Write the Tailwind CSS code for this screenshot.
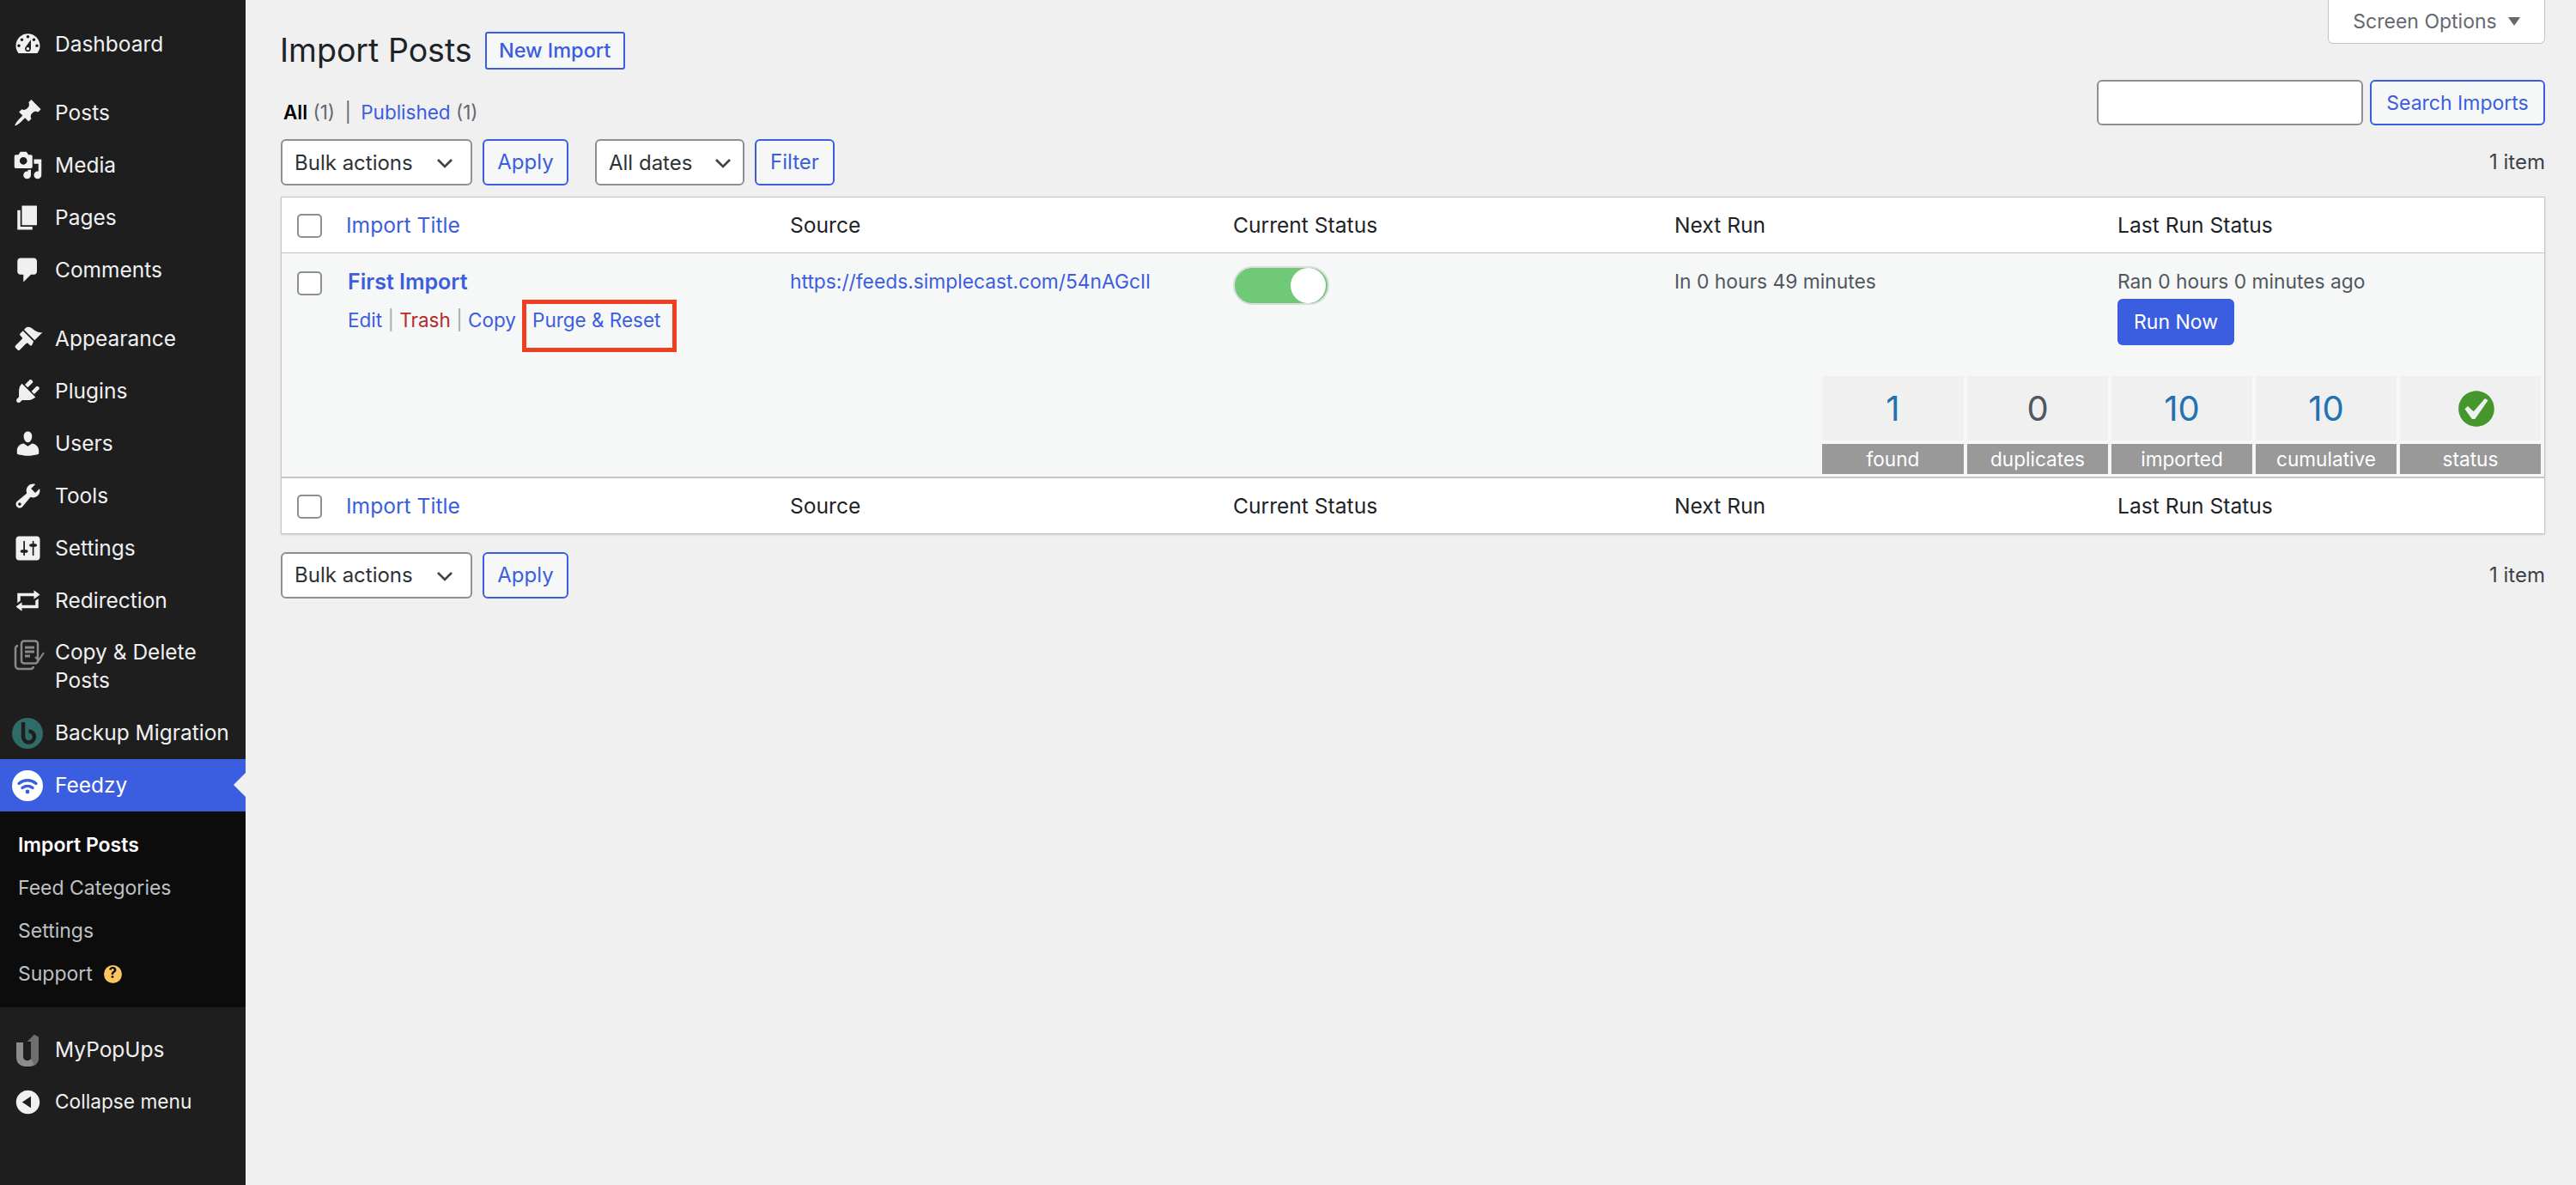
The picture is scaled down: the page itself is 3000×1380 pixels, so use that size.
<!DOCTYPE html>
<html lang="en">
<head>
    <meta charset="UTF-8">
    <title>Import Posts</title>
    <script src="https://cdn.jsdelivr.net/npm/@tailwindcss/browser@4"></script>
</head>
<body class="bg-[#f0f0f1] font-['Inter','Liberation_Sans',sans-serif] text-[#3c434a]">
<div class="flex h-[1380px] w-[3000px] overflow-hidden">
    <!-- Sidebar -->
    <aside class="w-[286px] shrink-0 bg-[#1e1e1e] text-[#f0f0f1] text-[24.5px] pt-[21px]">
        <a class="flex items-center h-[61px]"><span class="w-[64px] flex justify-center"><svg class="w-[35px] h-[35px] fill-[#f0f0f1]" fill-rule="evenodd" viewBox="0 0 20 20"><path d="M3.76 16h12.48c1.1-1.37 1.76-3.11 1.76-5 0-4.42-3.58-8-8-8s-8 3.58-8 8c0 1.89.66 3.63 1.76 5zM10 4c.55 0 1 .45 1 1s-.45 1-1 1-1-.45-1-1 .45-1 1-1zM6 6c.55 0 1 .45 1 1s-.45 1-1 1-1-.45-1-1 .45-1 1-1zm8 0c.55 0 1 .45 1 1s-.45 1-1 1-1-.45-1-1 .45-1 1-1zm-5.37 5.55L12 7v6c0 1.1-.9 2-2 2s-2-.9-2-2c0-.57.24-1.08.63-1.45zM4 10c.55 0 1 .45 1 1s-.45 1-1 1-1-.45-1-1 .45-1 1-1zm12 0c.55 0 1 .45 1 1s-.45 1-1 1-1-.45-1-1 .45-1 1-1zm-5 3c0-.55-.45-1-1-1s-1 .45-1 1 .45 1 1 1 1-.45 1-1z"/></svg></span>Dashboard</a>

        <a class="flex items-center h-[61px] mt-[19px]"><span class="w-[64px] flex justify-center"><svg class="w-[35px] h-[35px] fill-[#f0f0f1]" viewBox="0 0 20 20"><path d="M10.44 3.02l1.82-1.82 6.36 6.35-1.83 1.82c-1.05-.68-2.48-.57-3.41.36l-.75.75c-.92.93-1.04 2.35-.35 3.41l-1.83 1.82-2.41-2.41-2.8 2.79c-.42.42-3.38 2.71-3.8 2.29s1.86-3.39 2.28-3.81l2.79-2.79L4.1 9.36l1.83-1.82c1.05.69 2.48.57 3.4-.36l.75-.75c.93-.92 1.05-2.35.36-3.41z"/></svg></span>Posts</a>
        <a class="flex items-center h-[61px]"><span class="w-[64px] flex justify-center"><svg class="w-[35px] h-[35px] fill-[#f0f0f1]" fill-rule="evenodd" viewBox="0 0 20 20"><path d="M13 11V4c0-.55-.45-1-1-1h-1.67L9 1H5L3.67 3H2c-.55 0-1 .45-1 1v7c0 .55.45 1 1 1h10c.55 0 1-.45 1-1zM7 4.5c1.38 0 2.5 1.12 2.5 2.5S8.38 9.5 7 9.5 4.5 8.38 4.5 7 5.62 4.5 7 4.5zM14 6h5v10.5c0 1.38-1.12 2.5-2.5 2.5S14 17.88 14 16.5s1.12-2.5 2.5-2.5c.17 0 .34.02.5.05V9h-3V6zm-4 8.05V13h2v3.5c0 1.38-1.12 2.5-2.5 2.5S7 17.88 7 16.5 8.12 14 9.5 14c.17 0 .34.02.5.05z"/></svg></span>Media</a>
        <a class="flex items-center h-[61px]"><span class="w-[64px] flex justify-center"><svg class="w-[35px] h-[35px] fill-[#f0f0f1]" viewBox="0 0 20 20"><path d="M6 15V2h10v13H6zm-1 1h8v2H3V5h2v11z"/></svg></span>Pages</a>
        <a class="flex items-center h-[61px]"><span class="w-[64px] flex justify-center"><svg class="w-[35px] h-[35px] fill-[#f0f0f1]" viewBox="0 0 20 20"><path d="M5 2h9c1.1 0 2 .9 2 2v7c0 1.1-.9 2-2 2h-2l-5 5v-5H5c-1.1 0-2-.9-2-2V4c0-1.1.9-2 2-2z"/></svg></span>Comments</a>

        <a class="flex items-center h-[61px] mt-[19px]"><span class="w-[64px] flex justify-center"><svg class="w-[35px] h-[35px] fill-[#f0f0f1]" viewBox="0 0 20 20"><path d="M14.48 11.06L7.41 3.99l1.5-1.5c.5-.56 2.3-.47 3.51.32 1.21.8 1.43 1.28 2.91 2.1 1.18.64 2.45 1.26 4.45.85zm-.71.71L6.7 4.7 4.93 6.47c-.39.39-.39 1.02 0 1.41l1.06 1.06c.39.39.39 1.02 0 1.41l-4.24 4.24c-.39.39-.39 1.02 0 1.41l1.41 1.41c.39.39 1.02.39 1.41 0l4.24-4.24c.39-.39 1.02-.39 1.41 0l1.06 1.06c.39.39 1.02.39 1.41 0z"/></svg></span>Appearance</a>
        <a class="flex items-center h-[61px]"><span class="w-[64px] flex justify-center"><svg class="w-[35px] h-[35px] fill-[#f0f0f1]" viewBox="0 0 20 20"><path d="M13.11 4.36L9.87 7.6 8 5.73l3.24-3.24c.35-.34 1.05-.2 1.56.32.52.51.66 1.21.31 1.55zm-8 1.77l.91-1.12 9.01 9.01-1.19.84c-.71.71-2.63 1.16-3.82 1.16H6.14L4.9 17.26c-.59.59-1.54.59-2.12 0-.59-.58-.59-1.53 0-2.12l1.24-1.24v-3.88c0-1.13.4-3.19 1.09-3.89zm7.26 3.97l3.24-3.24c.34-.35 1.04-.21 1.55.31.52.51.66 1.21.31 1.55l-3.24 3.25z"/></svg></span>Plugins</a>
        <a class="flex items-center h-[61px]"><span class="w-[64px] flex justify-center"><svg class="w-[35px] h-[35px] fill-[#f0f0f1]" viewBox="0 0 20 20"><path d="M10 9.25c-2.27 0-2.73-3.44-2.73-3.44C7 4.02 7.82 2 9.97 2c2.16 0 2.98 2.02 2.71 3.81 0 0-.41 3.44-2.68 3.44zm0 2.57L12.72 10c2.39 0 4.52 2.33 4.52 4.53v2.49s-3.65 1.13-7.24 1.13c-3.65 0-7.24-1.13-7.24-1.13v-2.49c0-2.25 1.94-4.48 4.47-4.48z"/></svg></span>Users</a>
        <a class="flex items-center h-[61px]"><span class="w-[64px] flex justify-center"><svg class="w-[35px] h-[35px] fill-[#f0f0f1]" fill-rule="evenodd" viewBox="0 0 20 20"><path d="M16.68 9.77c-1.34 1.34-3.3 1.67-4.95.99l-5.41 6.52c-.99.99-2.59.99-3.58 0s-.99-2.59 0-3.57l6.52-5.42c-.68-1.65-.35-3.61.99-4.95 1.28-1.28 3.12-1.62 4.72-1.06l-2.89 2.89 2.82 2.82 2.86-2.87c.53 1.58.18 3.39-1.08 4.65zM3.81 16.21c.4.39 1.04.39 1.43 0 .4-.4.4-1.04 0-1.43-.39-.4-1.03-.4-1.43 0-.39.39-.39 1.03 0 1.43z"/></svg></span>Tools</a>
        <a class="flex items-center h-[61px]"><span class="w-[64px] flex justify-center"><svg class="w-[35px] h-[35px] fill-[#f0f0f1]" fill-rule="evenodd" viewBox="0 0 20 20"><path d="M18 16V4c0-1.1-.9-2-2-2H4c-1.1 0-2 .9-2 2v12c0 1.1.9 2 2 2h12c1.1 0 2-.9 2-2zM8 11h1c.55 0 1 .45 1 1s-.45 1-1 1H8v1.5c0 .28-.22.5-.5.5s-.5-.22-.5-.5V13H6c-.55 0-1-.45-1-1s.45-1 1-1h1V5.5c0-.28.22-.5.5-.5s.5.22.5.5V11zm5-2h-1c-.55 0-1-.45-1-1s.45-1 1-1h1V5.5c0-.28.22-.5.5-.5s.5.22.5.5V7h1c.55 0 1 .45 1 1s-.45 1-1 1h-1v5.5c0 .28-.22.5-.5.5s-.5-.22-.5-.5V9z"/></svg></span>Settings</a>
        <a class="flex items-center h-[61px]"><span class="w-[64px] flex justify-center"><svg class="w-[35px] h-[35px] fill-[#f0f0f1]" viewBox="0 0 20 20"><path d="M5 7v3l-2 1.5V5h11V3l4 3.01L14 9V7H5zm10 6v-3l2-1.5V15H6v2l-4-3.01L6 11v2h9z"/></svg></span>Redirection</a>
        <a class="flex items-start h-[93px] pt-[13px] leading-[33px]">
            <span class="w-[64px] flex justify-center pt-[2px] pl-[4px]"><svg class="w-[36px] h-[36px]" viewBox="0 0 36 36" fill="none" stroke="#8a8a8a" stroke-width="2.5"><rect x="9" y="1.5" width="19" height="26" rx="3"/><path d="M5 7 a3 3 0 0 0-3 3 v20 a4 4 0 0 0 4 4 h14 a3 3 0 0 0 3-3"/><path d="M13 9h11M13 14h11M13 19h6" stroke-width="3"/><path d="M25 20l4 4 6-9" stroke-width="2"/></svg></span>
            <span>Copy &amp; Delete<br>Posts</span>
        </a>
        <a class="flex items-center h-[61px]"><span class="w-[64px] flex justify-center"><svg class="w-[36px] h-[36px]" viewBox="0 0 36 36"><circle cx="18" cy="18" r="18" fill="#2f6b68"/><path d="M13 5v17a6.5 6.5 0 1 0 6.5-6.5" fill="none" stroke="#1e1e1e" stroke-width="4.5"/></svg></span>Backup Migration</a>
        <a class="relative flex items-center h-[61px] bg-[#3b5de0] text-white"><span class="w-[64px] flex justify-center"><svg class="w-[36px] h-[36px]" viewBox="0 0 36 36" fill="none" stroke="#3b5de0" stroke-linecap="round" stroke-width="3.4"><circle cx="18" cy="18" r="18" fill="#fff" stroke="none"/><path d="M8 15.5c6-5 14-5 20 0M12 20.5c3.6-2.8 8.4-2.8 12 0"/><circle cx="18" cy="25" r="2.4" fill="#3b5de0" stroke="none"/></svg></span>Feedzy<span class="absolute right-0 top-[16px] border-y-[14px] border-r-[14px] border-y-transparent border-r-[#f0f0f1]"></span></a>
        <div class="bg-[#0c0c0c] h-[228px] pt-[14px] pl-[21px] text-[23px] text-[#bfc0c1]">
            <a class="flex items-center h-[50px] font-semibold text-white">Import Posts</a>
            <a class="flex items-center h-[50px]">Feed Categories</a>
            <a class="flex items-center h-[50px]">Settings</a>
            <a class="flex items-center h-[50px]">Support<span class="ml-[13px] w-[21px] h-[21px] rounded-full bg-[#fbc55f] text-[#0c0c0c] text-[17px] font-bold flex items-center justify-center">?</span></a>
        </div>
        <a class="flex items-center h-[61px] mt-[19px]"><span class="w-[64px] flex justify-center"><svg class="w-[28px] h-[38px]" viewBox="0 0 28 38"><path d="M1 10h8v17a5 5 0 0 0 9 2V9h-4l8-8 5 3v24a10 10 0 0 1-10 10h-6A10 10 0 0 1 1 28z" fill="#8c8c8c"/><path d="M18 29V9h-4l8-8 5 3v24a10 10 0 0 1-5 8.7z" fill="#6e6e6e"/></svg></span>MyPopUps</a>
        <a class="flex items-center h-[61px] text-[22.7px]"><span class="w-[64px] flex justify-center"><svg class="w-[35px] h-[35px] fill-[#f0f0f1]" fill-rule="evenodd" viewBox="0 0 20 20"><path d="M10 2.16c4.33 0 7.84 3.51 7.84 7.84s-3.51 7.84-7.84 7.84S2.16 14.33 2.16 10 5.71 2.16 10 2.16zm2 11.72V6.12L6.18 9.97z"/></svg></span>Collapse menu</a>
    </aside>

    <!-- Main -->
    <main class="relative flex-1 pl-[41px] pr-[36px] pt-[37px] text-[24px]">
        <!-- Screen options tab -->
        <div class="absolute top-0 right-[36px] w-[253px] h-[51px] bg-white border border-t-0 border-[#c3c4c7] rounded-b-[6px] flex items-center justify-center gap-[13px] text-[#646970] text-[23px]">
            Screen Options
            <span class="border-x-[7px] border-t-[10px] border-x-transparent border-t-[#646970]"></span>
        </div>

        <!-- Title -->
        <div class="flex items-center h-[44px]">
            <h1 class="text-[37.5px] text-[#1d2327] leading-none -ml-[1px]">Import Posts</h1>
            <a class="ml-[15px] w-[163px] h-[44px] border-2 border-[#3b5de0] rounded-[3px] bg-[#f6f7f7] text-[#3b5de0] text-[23.5px] font-medium flex items-center justify-center">New Import</a>
        </div>

        <!-- Views + search -->
        <div class="flex justify-between items-start mt-[12px] h-[53px]">
            <div class="pt-[24px] pl-[3px] leading-[28px] text-[22.5px] text-[#646970]">
                <b class="font-semibold text-black">All</b> (1) <span class="mx-[5px] text-[#646970]">|</span> <a class="text-[#3b5de0]">Published</a> (1)
            </div>
            <div class="flex gap-[8px]">
                <input type="text" class="w-[310px] h-[53px] bg-white border-2 border-[#8c8f94] rounded-[6px]">
                <a class="w-[204px] h-[53px] pt-[2px] border-2 border-[#3b5de0] rounded-[6px] bg-[#f6f7f7] text-[#3b5de0] text-[23px] flex items-center justify-center">Search Imports</a>
            </div>
        </div>

        <!-- Top toolbar -->
        <div class="flex items-center mt-[16px] h-[54px]">
            <div class="relative">
                <select class="appearance-none w-[223px] h-[54px] bg-white border-2 border-[#8c8f94] rounded-[6px] pl-[14px] pt-[1px] text-[#2c3338]"><option>Bulk actions</option></select>
                <svg class="absolute right-[22px] top-[22px] w-[20px] h-[12px]" viewBox="0 0 20 12" fill="none" stroke="#3c434a" stroke-width="2.6"><path d="M2 2l8 8 8-8"/></svg>
            </div>
            <a class="ml-[12px] w-[100px] h-[54px] border-2 border-[#3b5de0] rounded-[6px] bg-[#f6f7f7] text-[#3b5de0] flex items-center justify-center">Apply</a>
            <div class="relative ml-[31px]">
                <select class="appearance-none w-[174px] h-[54px] bg-white border-2 border-[#8c8f94] rounded-[6px] pl-[14px] pt-[1px] text-[#2c3338]"><option>All dates</option></select>
                <svg class="absolute right-[15px] top-[22px] w-[20px] h-[12px]" viewBox="0 0 20 12" fill="none" stroke="#3c434a" stroke-width="2.6"><path d="M2 2l8 8 8-8"/></svg>
            </div>
            <a class="ml-[12px] w-[93px] h-[54px] border-2 border-[#3b5de0] rounded-[6px] bg-[#f6f7f7] text-[#3b5de0] flex items-center justify-center">Filter</a>
            <span class="ml-auto text-[#3c434a]">1 item</span>
        </div>

        <!-- Table -->
        <div class="mt-[13px] bg-white border border-[#c3c4c7] shadow-sm text-[#1d2327]">
            <div class="grid grid-cols-[75px_517px_516px_514px_516px_1fr] items-center h-[65px] border-b border-[#c3c4c7] text-[24.6px] pt-[1px]">
                <span class="pl-[18px] flex"><input type="checkbox" class="appearance-none w-[29px] h-[28px] bg-white border-2 border-[#8c8f94] rounded-[5px]"></span>
                <a class="text-[#3b5de0]">Import Title</a>
                <span>Source</span>
                <span>Current Status</span>
                <span>Next Run</span>
                <span>Last Run Status</span>
            </div>
            <div class="bg-[#f6f7f7] border-b-2 border-[#c3c4c7] h-[262px]">
                <div class="grid grid-cols-[75px_517px_516px_514px_516px_1fr] h-[143px] text-[22.8px] text-[#50575e]">
                    <span class="pl-[18px] pt-[21px]"><input type="checkbox" class="block appearance-none w-[29px] h-[28px] bg-white border-2 border-[#8c8f94] rounded-[5px]"></span>
                    <div class="pl-[2px] pt-[15px]">
                        <a class="block leading-[36px] text-[25px] text-[#3b5de0] font-semibold">First Import</a>
                        <div class="mt-[9px] leading-[36px] text-[22.5px] text-[#a7aaad]">
                            <a class="text-[#3b5de0]">Edit</a> | <a class="text-[#b32d2e]">Trash</a> | <a class="text-[#3b5de0]">Copy</a> | <a class="relative -ml-[1px] text-[#3b5de0]">Purge &amp; Reset<span class="absolute -left-[12px] -right-[19px] -top-[10px] -bottom-[24px] border-[5px] border-[#ee3f20]"></span></a>
                        </div>
                    </div>
                    <a class="pt-[15px] leading-[36px] text-[#3b5de0]">https://feeds.simplecast.com/54nAGcIl</a>
                    <div class="pt-[15px]">
                        <div class="w-[112px] h-[45px] rounded-full bg-[#6fc976] border-2 border-[#dcdcde] flex items-center justify-end pr-[2px]"><span class="w-[41px] h-[41px] rounded-full bg-white"></span></div>
                    </div>
                    <span class="pt-[15px] leading-[36px]">In 0 hours 49 minutes</span>
                    <div class="pt-[15px]">
                        <span class="block leading-[36px]">Ran 0 hours 0 minutes ago</span>
                        <a class="mt-[2px] w-[136px] h-[54px] rounded-[6px] bg-[#3b5de0] text-white text-[23px] flex items-center justify-center">Run Now</a>
                    </div>
                </div>
                <div class="flex justify-end gap-[4px] pr-[4px] text-[22.6px]">
                    <div class="w-[165px]"><div class="h-[75px] bg-[#f0f0f1] flex items-center justify-center text-[#2271b1] text-[40px]">1</div><div class="mt-[4px] h-[35px] bg-[#999] text-white flex items-center justify-center">found</div></div>
                    <div class="w-[164px]"><div class="h-[75px] bg-[#f0f0f1] flex items-center justify-center text-[#50575e] text-[40px]">0</div><div class="mt-[4px] h-[35px] bg-[#999] text-white flex items-center justify-center">duplicates</div></div>
                    <div class="w-[164px]"><div class="h-[75px] bg-[#f0f0f1] flex items-center justify-center text-[#2271b1] text-[40px]">10</div><div class="mt-[4px] h-[35px] bg-[#999] text-white flex items-center justify-center">imported</div></div>
                    <div class="w-[164px]"><div class="h-[75px] bg-[#f0f0f1] flex items-center justify-center text-[#2271b1] text-[40px]">10</div><div class="mt-[4px] h-[35px] bg-[#999] text-white flex items-center justify-center">cumulative</div></div>
                    <div class="w-[164px]"><div class="h-[75px] bg-[#f0f0f1] flex items-center justify-center pl-[14px]"><svg class="w-[52px] h-[52px] fill-[#46962e]" fill-rule="evenodd" viewBox="0 0 20 20"><path d="M10 2c-4.42 0-8 3.58-8 8s3.58 8 8 8 8-3.58 8-8-3.58-8-8-8zm-.615 12.66h-1.34l-3.24-4.54 1.341-1.25 2.569 2.4 5.141-5.931 1.34.94-5.81 8.381z"/></svg></div><div class="mt-[4px] h-[35px] bg-[#999] text-white flex items-center justify-center">status</div></div>
                </div>
            </div>
            <div class="grid grid-cols-[75px_517px_516px_514px_516px_1fr] items-center h-[64px] text-[24.6px] pt-[1px]">
                <span class="pl-[18px] flex"><input type="checkbox" class="appearance-none w-[29px] h-[28px] bg-white border-2 border-[#8c8f94] rounded-[5px]"></span>
                <a class="text-[#3b5de0]">Import Title</a>
                <span>Source</span>
                <span>Current Status</span>
                <span>Next Run</span>
                <span>Last Run Status</span>
            </div>
        </div>

        <!-- Bottom toolbar -->
        <div class="flex items-center mt-[21px] h-[54px]">
            <div class="relative">
                <select class="appearance-none w-[223px] h-[54px] bg-white border-2 border-[#8c8f94] rounded-[6px] pl-[14px] text-[#2c3338]"><option>Bulk actions</option></select>
                <svg class="absolute right-[22px] top-[22px] w-[20px] h-[12px]" viewBox="0 0 20 12" fill="none" stroke="#3c434a" stroke-width="2.6"><path d="M2 2l8 8 8-8"/></svg>
            </div>
            <a class="ml-[12px] w-[100px] h-[54px] border-2 border-[#3b5de0] rounded-[6px] bg-[#f6f7f7] text-[#3b5de0] flex items-center justify-center">Apply</a>
            <span class="ml-auto text-[#3c434a]">1 item</span>
        </div>
    </main>
</div>
</body>
</html>
